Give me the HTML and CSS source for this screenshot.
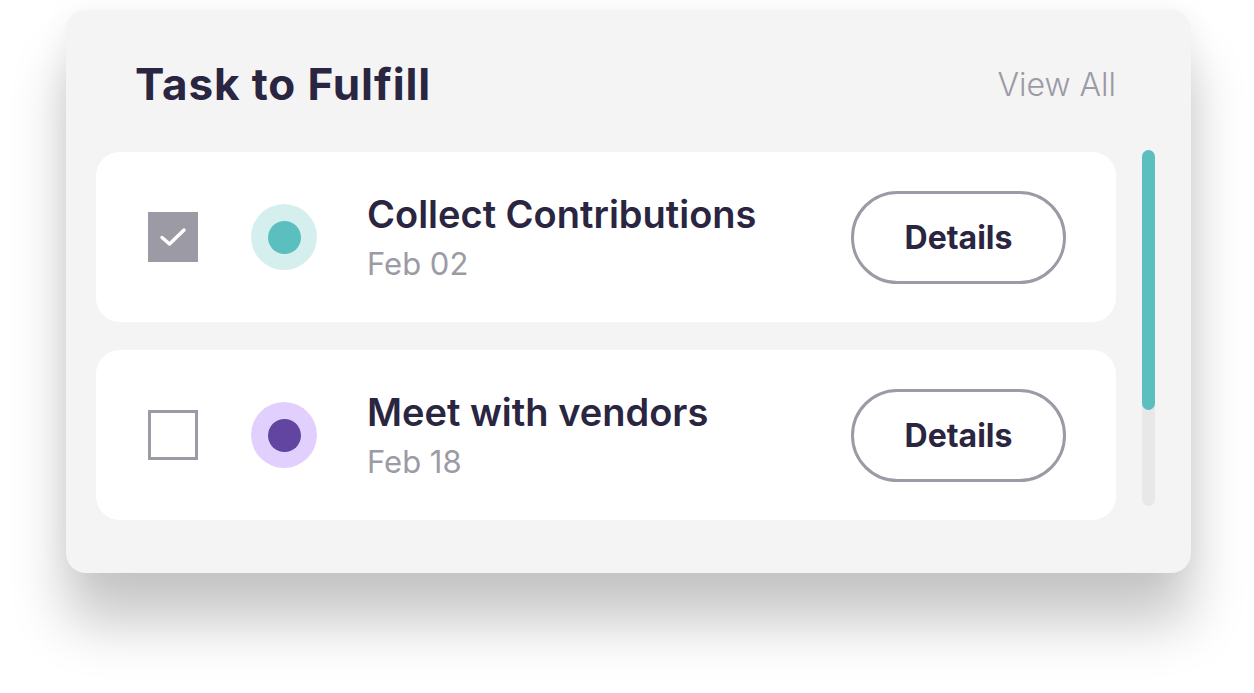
FILE: index.html
```
<!DOCTYPE html>
<html lang="en">
<head>
<meta charset="UTF-8">
<meta name="viewport" content="width=device-width, initial-scale=1.0">
<title>Task to Fulfill</title>
<link rel="stylesheet" href="styles.css">
</head>
<body>

<div class="card">
  <div class="card-header">
    <h1>Task to Fulfill</h1>
    <a class="view-all" href="#">View All</a>
  </div>

  <div class="list-wrap">
    <div class="task-list">
      <div class="task">
        <span class="check checked">
          <svg width="28" height="22" viewBox="0 0 28 22"><path d="M3 11.5l7.5 6.5L25 4" fill="none" stroke="#fff" stroke-width="3.5" stroke-linecap="round" stroke-linejoin="round"/></svg>
        </span>
        <span class="dot dot-teal"><span></span></span>
        <div class="task-info">
          <div class="task-title">Collect Contributions</div>
          <div class="task-date">Feb 02</div>
        </div>
        <button class="details" type="button">Details</button>
      </div>

      <div class="task">
        <span class="check"></span>
        <span class="dot dot-purple"><span></span></span>
        <div class="task-info">
          <div class="task-title">Meet with vendors</div>
          <div class="task-date">Feb 18</div>
        </div>
        <button class="details" type="button">Details</button>
      </div>
    </div>

    <div class="scrollbar"><div class="thumb"></div></div>
  </div>
</div>

</body>
</html>
```

FILE: styles.css
```
html, body {
  height: 100%;
}

body {
  margin: 0;
  padding: 10px 0 0 66px;
  box-sizing: border-box;
  min-height: 693px;
  background-color: #fff;
  font-family: Inter, "Noto Sans", sans-serif;
  color: #2a2540;
}

.card {
  width: 1125px;
  height: 563px;
  box-sizing: border-box;
  background-color: #f4f4f4;
  border-radius: 20px;
  box-shadow: 0 50px 55px rgba(0, 0, 0, 0.22), 0 0 30px rgba(0, 0, 0, 0.05);
}

.card-header {
  display: flex;
  align-items: center;
  justify-content: space-between;
  height: 142px;
  padding: 6px 75px 0 69px;
  box-sizing: border-box;
}

h1 {
  margin: 0;
  font-size: 44px;
  font-weight: 700;
  letter-spacing: 0.9px;
}

.view-all {
  color: #9c9aa5;
  font-size: 32px;
  font-weight: 300;
  text-decoration: none;
}

.list-wrap {
  display: flex;
  gap: 26px;
  padding: 0 36px 0 30px;
}

.task-list {
  width: 1020px;
  display: flex;
  flex-direction: column;
  gap: 28px;
}

.task {
  display: flex;
  align-items: center;
  height: 170px;
  padding: 0 50px 0 52px;
  box-sizing: border-box;
  background-color: #fff;
  border-radius: 24px;
}

.check {
  width: 50px;
  height: 50px;
  box-sizing: border-box;
  border: 3px solid #9c9aa5;
  display: flex;
  align-items: center;
  justify-content: center;
  flex-shrink: 0;
}

.check.checked {
  background-color: #9c9aa5;
  border-color: #9c9aa5;
}

.dot {
  width: 66px;
  height: 66px;
  border-radius: 50%;
  margin-left: 53px;
  display: flex;
  align-items: center;
  justify-content: center;
  flex-shrink: 0;
}

.dot span {
  width: 33px;
  height: 33px;
  border-radius: 50%;
}

.dot-teal { background-color: #d5eeee; }
.dot-teal span { background-color: #5bbfbf; }
.dot-purple { background-color: #e1d0fd; }
.dot-purple span { background-color: #6245a0; }

.task-info {
  margin-left: 50px;
  flex: 1;
}

.task-title {
  font-size: 38px;
  font-weight: 600;
  line-height: 44px;
}

.task-date {
  font-size: 31px;
  color: #9c9aa5;
  line-height: 36px;
  margin-top: 10px;
}

.details {
  width: 215px;
  height: 93px;
  border: 3px solid #9c9aa5;
  border-radius: 47px;
  background-color: #fff;
  color: #2a2540;
  font-family: Inter, "Noto Sans", sans-serif;
  font-size: 32px;
  font-weight: 700;
  cursor: pointer;
}

.scrollbar {
  width: 13px;
  height: 356px;
  margin-top: -2px;
  border-radius: 7px;
  background-color: #e8e8e8;
}

.thumb {
  height: 260px;
  border-radius: 7px;
  background-color: #5bbfbf;
}
```
